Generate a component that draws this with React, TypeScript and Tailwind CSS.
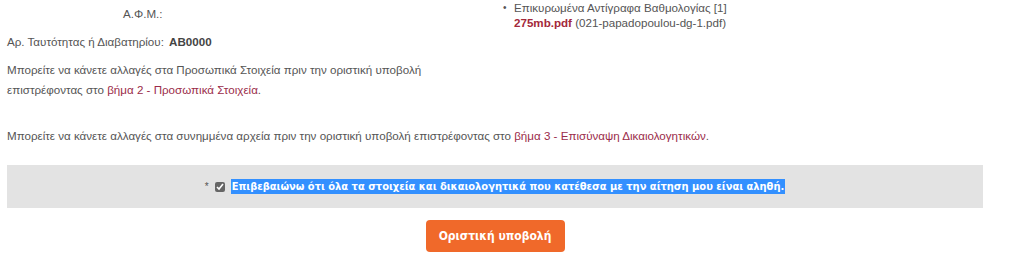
export default function App() {
  return (
    <div className="w-[1024px] h-[263px] bg-white text-[11.6px] text-[#555] overflow-hidden" style={{ fontFamily: '"Liberation Sans", Arial, sans-serif' }}>
      <div className="flex h-[32px]">
        <div className="w-[500px] pl-[123px] pt-[5px]">Α.Φ.Μ.:</div>
        <ul className="pl-[3px] pt-0 leading-[15px]">
          <li className="flex">
            <span className="w-[11px] text-[10px]">•</span>
            <div>
              <div>Επικυρωμένα Αντίγραφα Βαθμολογίας [1]</div>
              <div>
                <span className="font-bold text-[#a3283a]">275mb.pdf</span> (021-papadopoulou-dg-1.pdf)
              </div>
            </div>
          </li>
        </ul>
      </div>
      <div className="px-[7px]">
        <div className="h-[20px] leading-[20px]">
          Αρ. Ταυτότητας ή Διαβατηρίου: <span className="ml-[2px] font-bold text-[#444]">AB0000</span>
        </div>
        <div className="mt-[8px] leading-[20px]">Μπορείτε να κάνετε αλλαγές στα Προσωπικά Στοιχεία πριν την οριστική υποβολή</div>
        <div className="leading-[20px]">
          επιστρέφοντας στο <span className="text-[#9b2c4a]">βήμα 2 - Προσωπικά Στοιχεία</span>.
        </div>
        <div className="mt-[26px] leading-[20px]">
          Μπορείτε να κάνετε αλλαγές στα συνημμένα αρχεία πριν την οριστική υποβολή επιστρέφοντας στο{' '}
          <span className="text-[#9b2c4a]">βήμα 3 - Επισύναψη Δικαιολογητικών</span>.
        </div>
      </div>
      <div className="mt-[19px] ml-[7px] w-[976px] h-[43px] bg-[#e3e3e3] flex items-center justify-center">
        <span className="text-[10px] mr-[6px] text-[#555]">*</span>
        <input type="checkbox" defaultChecked className="w-[10px] h-[10px] mr-[6px] accent-[#666]" />
        <span
          className="bg-[#3390ff] text-white font-bold text-[11px] leading-[15px] px-[1px]"
          style={{ fontFamily: '"DejaVu Sans Condensed", "DejaVu Sans", sans-serif' }}
        >
          Επιβεβαιώνω ότι όλα τα στοιχεία και δικαιολογητικά που κατέθεσα με την αίτηση μου είναι αληθή.
        </span>
      </div>
      <div className="flex justify-center mt-[12px] ml-[7px] w-[976px]">
        <button
          className="w-[139px] h-[32px] rounded-[4px] bg-[#f0692a] text-white font-bold text-[12px]"
          style={{ fontFamily: '"DejaVu Sans Condensed", "DejaVu Sans", sans-serif' }}
        >
          Οριστική υποβολή
        </button>
      </div>
    </div>
  )
}
